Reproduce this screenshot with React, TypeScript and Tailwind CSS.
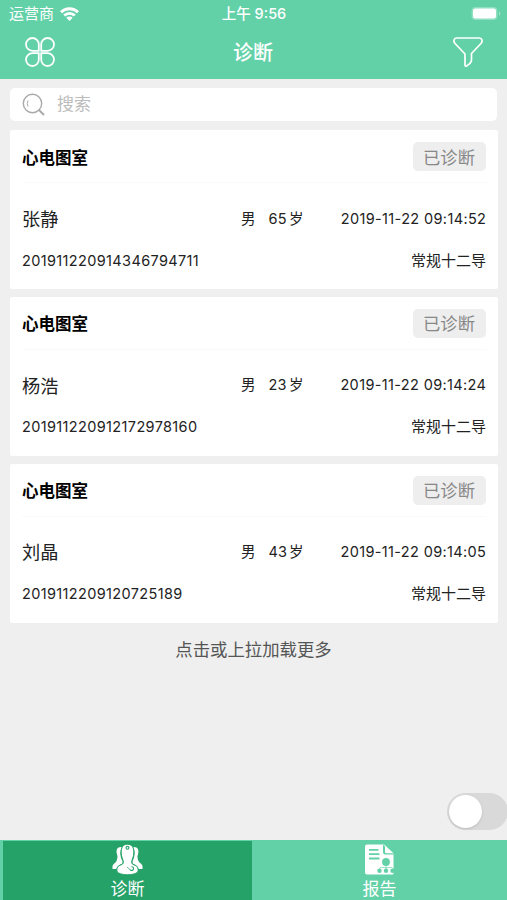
const records = [
  { name: "张静", sex: "男", age: 65, time: "2019-11-22 09:14:52", id: "201911220914346794711" },
  { name: "杨浩", sex: "男", age: 23, time: "2019-11-22 09:14:24", id: "201911220912172978160" },
  { name: "刘晶", sex: "男", age: 43, time: "2019-11-22 09:14:05", id: "2019112209120725189" },
];

function StatusBar() {
  return (
    <div className="grid h-[27px] grid-cols-3 items-center pl-[9px] pr-[6px] text-[15px] leading-none">
      <div className="flex items-center gap-[6px]">
        <span>运营商</span>
        <svg width="19" height="14" viewBox="0 0 19 14" fill="none" stroke="white" strokeWidth="2.8">
          <path d="M1 5.2a12.2 12.2 0 0 1 17 0" />
          <path d="M4.2 8.6a7.6 7.6 0 0 1 10.6 0" />
          <path d="M9.5 14 6.3 10.8a4.6 4.6 0 0 1 6.4 0Z" fill="white" stroke="none" />
        </svg>
      </div>
      <div className="-ml-[2px] whitespace-nowrap pt-px text-center text-[14.5px] font-medium">上午 9:56</div>
      <div className="flex justify-end">
        <svg width="30" height="14" viewBox="0 0 30 14">
          <rect x="0.5" y="0" width="26" height="13" rx="4" fill="#8fdfc0" />
          <rect x="2" y="1.5" width="23" height="10" rx="2.5" fill="white" />
          <path d="M28 4.5v4c1.8-.6 1.8-3.4 0-4Z" fill="#a5e5cd" />
        </svg>
      </div>
    </div>
  );
}

function Header() {
  return (
    <header className="h-[79px] bg-[#63d1a8] text-white">
      <StatusBar />
      <div className="flex h-[50px] items-center justify-between pl-[25px] pr-[24px]">
        <svg width="30" height="30" viewBox="0 0 30 30" fill="none" stroke="white" strokeWidth="1.8">
          <path d="M13.8 13.8V7.4A6.4 6.4 0 1 0 7.4 13.8Z" />
          <path d="M16.2 13.8V7.4A6.4 6.4 0 1 1 22.6 13.8Z" />
          <path d="M13.8 16.2V22.6A6.4 6.4 0 1 1 7.4 16.2Z" />
          <path d="M16.2 16.2V22.6A6.4 6.4 0 1 0 22.6 16.2Z" />
        </svg>
        <h1 className="mr-[2px] pt-[2px] text-[20px] font-medium">诊断</h1>
        <svg width="30" height="30" viewBox="0 0 30 30" fill="none" stroke="white" strokeWidth="1.7" strokeLinejoin="round">
          <path d="M4 1H26C29 1 30 4 28 6.5L18.5 16.5V23C18.5 25 16 27.5 13.5 29Q12 29.5 12 28V17L2 6.5C0 4 1 1 4 1Z" />
        </svg>
      </div>
    </header>
  );
}

function SearchBox() {
  return (
    <div className="mx-[10px] mt-[9px] flex h-[33px] items-center gap-[12px] rounded-[5px] bg-white pl-[12px] text-[17px] text-[#bcbcbc]">
      <svg width="23" height="23" viewBox="0 0 23 23" fill="none" stroke="#aaa" strokeWidth="1.4">
        <circle cx="10.5" cy="10.5" r="9.2" />
        <path d="M6 7.5Q4.6 10.5 6 13.5" strokeWidth="1" />
        <path d="m16.5 16.5 5.5 5.5" strokeWidth="2" />
      </svg>
      <span className="pt-px">搜索</span>
    </div>
  );
}

function RecordCard({ record }: { record: (typeof records)[number] }) {
  return (
    <article className="h-[159.3px] rounded-[2px] bg-white px-[12px] text-[14.5px] text-[#222]">
      <div className="flex h-[53px] items-center justify-between border-b border-[#fafafa]">
        <h2 className="pt-[4px] text-[16.5px] font-bold text-black">心电图室</h2>
        <span className="mt-px flex h-[29px] w-[73px] items-center justify-center rounded-[5px] bg-[#eee] pr-px pt-[2px] text-[17.3px] text-[#888]">
          已诊断
        </span>
      </div>
      <div className="mt-[14.4px] flex h-[42px] items-center">
        <span className="w-[219px] pt-[2px] text-[18.2px]">{record.name}</span>
        <span className="w-[27.5px]">{record.sex}</span>
        <span className="w-[20.5px] tracking-[0.2px]">{record.age}</span>
        <span>岁</span>
        <span className="-mr-[0.3px] ml-auto tracking-[0.36px]">{record.time}</span>
      </div>
      <div className="flex h-[42px] items-center justify-between">
        <span className="tracking-[0.36px]">{record.id}</span>
        <span className="pt-px text-[15px]">常规十二导</span>
      </div>
    </article>
  );
}

function DoctorsIcon() {
  return (
    <svg className="shrink-0" width="31" height="31" viewBox="0 0 31 31" fill="white">
      <path d="M10 3C5 2.5 4 6 4.8 9.5C5.5 12 6 13 4.5 17C4 19 1 19.5 .5 22V25H4.5C5.5 22 8 20.5 10.5 19.5V17C8 13 7.5 7 10 3Z" />
      <path d="M21 3C26 2.5 27 6 26.2 9.5C25.5 12 25 13 26.5 17C27 19 30 19.5 30.5 22V25H26.5C25.5 22 23 20.5 20.5 19.5V17C23 13 23.5 7 21 3Z" />
      <path
        d="M15.5 .3C10.5 .3 9 4 9.2 9C9.4 13 10.8 15 11.3 17.5C11.7 20 10 20.5 8 21.2C5.5 22 4.8 24 4.8 27C6 29.5 10 30.7 15.5 30.7S25 29.5 26.2 27C26.2 24 25.5 22 23 21.2C21 20.5 19.3 20 19.7 17.5C20.2 15 21.6 13 21.8 9C22 4 20.5 .3 15.5 .3Z"
        stroke="#25a268"
        strokeWidth="1"
      />
      <circle cx="15.5" cy="3.8" r="2" fill="#25a268" />
      <path d="M14.5 3.8h2M15.5 2.8v2" stroke="white" strokeWidth="0.7" />
      <path d="M15 23 18 25.5" fill="none" stroke="#25a268" strokeWidth="0.7" />
      <path d="M18 25.5a1.9 1.9 0 1 0 1.5-2.8" fill="none" stroke="#25a268" strokeWidth="1.1" />
    </svg>
  );
}

function ReportIcon() {
  return (
    <svg className="shrink-0" width="31" height="31" viewBox="0 0 31 31" fill="white">
      <path d="M3 .5H20L29.5 10V29.5Q29.5 30.5 28.5 30.5H3Q1 30.5 1 28.5V2.5Q1 .5 3 .5Z" />
      <path d="M19 .5V8Q19 10.5 21.5 10.5H30Z" fill="#63d1a8" />
      <path d="M21 1.5 29.5 9.3H22.5Q21 9.3 21 8Z" />
      <g stroke="#63d1a8" fill="none">
        <path d="M5 5.8H14.5M5 10.2H15.5M5 14.5H15.5" strokeWidth="1.8" />
        <path d="M22 18V26M15.5 26V24.5Q15.5 23.5 17 23.5H27Q28.5 23.5 28.5 24.5V26" strokeWidth="0.6" />
      </g>
      <g fill="#63d1a8">
        <circle cx="22" cy="18" r="3.9" />
        <circle cx="15.5" cy="26.8" r="2.2" />
        <circle cx="22" cy="26.8" r="2.2" />
        <circle cx="28.5" cy="26.8" r="2.2" />
      </g>
    </svg>
  );
}

function TabBar() {
  return (
    <nav className="flex h-[60px] bg-[#63d1a8] pl-[3px] pt-px text-[17px] leading-[24px] text-white">
      <a className="flex w-[249px] flex-col items-center bg-[#25a268] pt-[3px]">
        <DoctorsIcon />
        <span className="mt-[2px]">诊断</span>
      </a>
      <a className="flex flex-1 flex-col items-center pt-[3px]">
        <ReportIcon />
        <span className="mt-[2px]">报告</span>
      </a>
    </nav>
  );
}

export default function App() {
  return (
    <div className="flex h-[900px] w-[507px] flex-col overflow-hidden bg-[#efefef] font-[Inter,'Noto_Sans_CJK_SC',sans-serif]">
      <Header />
      <SearchBox />
      <main className="mt-[9px] flex flex-col gap-[7.5px] pl-[10px] pr-[9px]">
        {records.map((record) => (
          <RecordCard key={record.id} record={record} />
        ))}
      </main>
      <button className="mt-[15px] text-[17.4px] leading-[24px] text-[#555]">点击或上拉加载更多</button>
      <div className="-mr-px mb-[10px] mt-auto flex h-[37px] w-[61px] shrink-0 items-center self-end rounded-full bg-[#d9d9d9] pl-[2px]">
        <div className="size-[33px] rounded-full bg-white shadow-sm" />
      </div>
      <TabBar />
    </div>
  );
}
